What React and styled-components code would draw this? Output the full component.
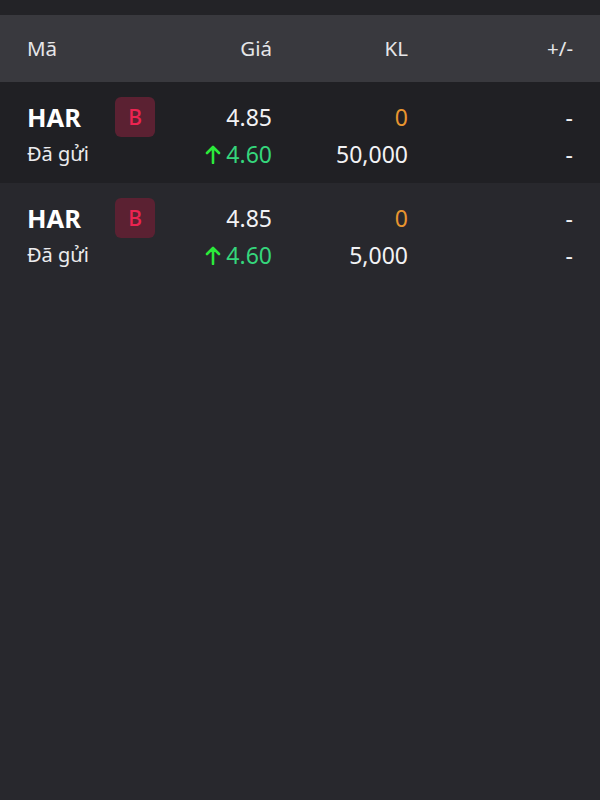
import styled, { createGlobalStyle } from "styled-components";

const GlobalStyle = createGlobalStyle`
  html, body {
    margin: 0;
    padding: 0;
    background: #28282d;
  }
  body {
    font-family: "Noto Sans", "Open Sans", sans-serif;
  }
`;

const orders = [
  { code: "HAR", side: "B", price: "4.85", match: "4.60", vol: "0", total: "50,000", status: "Đã gửi" },
  { code: "HAR", side: "B", price: "4.85", match: "4.60", vol: "0", total: "5,000", status: "Đã gửi" },
];

const App = () => {
  return (
    <Page>
      <GlobalStyle />
      <TopBar />
      <Header>
        <HeadCell>Mã</HeadCell>
        <HeadCell right>Giá</HeadCell>
        <HeadCell right>KL</HeadCell>
        <HeadCell right>+/-</HeadCell>
      </Header>
      {orders.map((o, i) => (
        <Row key={i} dark={i % 2 === 0}>
          <CodeCell>
            <TopLine>
              <Code>{o.code}</Code>
              <Badge>{o.side}</Badge>
            </TopLine>
            <Status>{o.status}</Status>
          </CodeCell>
          <Cell>
            <TopValue>{o.price}</TopValue>
            <BottomValue color="#35d67c">
              <Arrow viewBox="0 0 16 20">
                <path d="M8 19V3M2 9l6-6 6 6" fill="none" stroke="#2bea3a" strokeWidth="2.6" strokeLinecap="round" strokeLinejoin="round" />
              </Arrow>
              {o.match}
            </BottomValue>
          </Cell>
          <Cell>
            <TopValue color="#e8952f">{o.vol}</TopValue>
            <BottomValue>{o.total}</BottomValue>
          </Cell>
          <Cell>
            <TopValue>-</TopValue>
            <BottomValue>-</BottomValue>
          </Cell>
        </Row>
      ))}
    </Page>
  );
};

const Page = styled.div`
  width: 600px;
  min-height: 800px;
  background: #28282d;
`;

const TopBar = styled.div`
  height: 15px;
  background: #232327;
`;

const Columns = styled.div`
  display: grid;
  grid-template-columns: 153px 92px 136px 165px;
  padding: 0 27px;
`;

const Header = styled(Columns)`
  height: 67px;
  align-items: center;
  background: #39393e;
`;

const HeadCell = styled.div`
  color: #e6e6e8;
  font-size: 20.5px;
  text-align: ${(p) => (p.right ? "right" : "left")};
  padding-bottom: 1px;
`;

const Row = styled(Columns)`
  height: 101px;
  background: ${(p) => (p.dark ? "#202024" : "#28282d")};
  padding-top: 14px;
  box-sizing: border-box;
`;

const CodeCell = styled.div`
  display: flex;
  flex-direction: column;
`;

const TopLine = styled.div`
  display: flex;
  align-items: center;
  height: 42px;
`;

const Code = styled.span`
  width: 88px;
  color: #ffffff;
  font-size: 25.5px;
  font-weight: 700;
`;

const Badge = styled.span`
  width: 40px;
  height: 40px;
  border-radius: 6px;
  background: #5b2132;
  color: #ec2451;
  font-size: 21px;
  font-weight: 500;
  display: flex;
  align-items: center;
  justify-content: center;
`;

const Status = styled.span`
  color: #ececee;
  font-size: 20px;
  line-height: 32px;
`;

const Cell = styled.div`
  display: flex;
  flex-direction: column;
  align-items: flex-end;
`;

const TopValue = styled.span`
  display: flex;
  align-items: center;
  height: 42px;
  color: ${(p) => p.color || "#f2f2f4"};
  font-size: 23px;
`;

const BottomValue = styled(TopValue)`
  height: 32px;
  gap: 5px;
`;

const Arrow = styled.svg`
  width: 16px;
  height: 20px;
`;

export default App;
